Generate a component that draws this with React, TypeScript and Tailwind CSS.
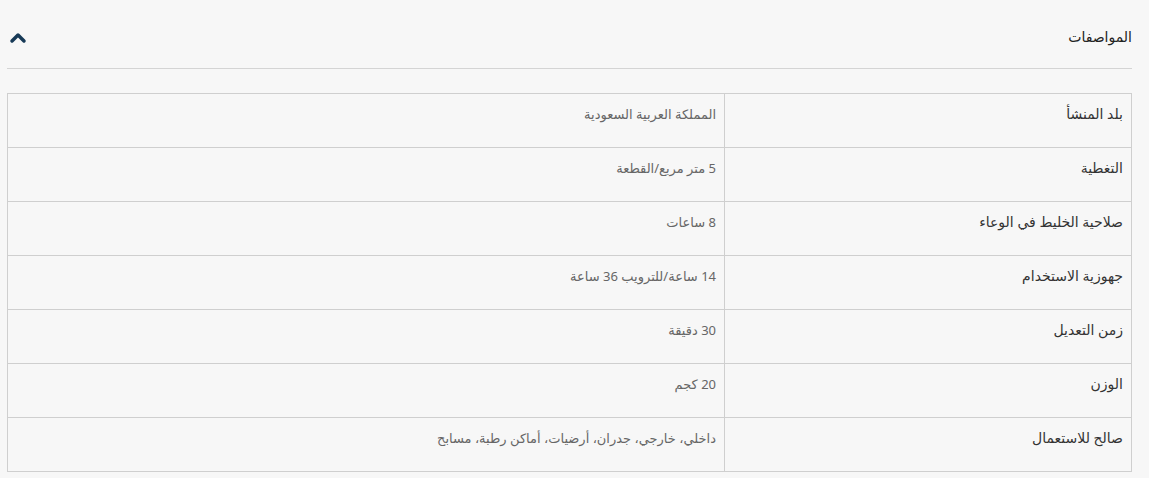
import { ChevronUp } from "lucide-react";

const specs: [string, string][] = [
  ["بلد المنشأ", "المملكة العربية السعودية"],
  ["التغطية", "5 متر مربع/القطعة"],
  ["صلاحية الخليط في الوعاء", "8 ساعات"],
  ["جهوزية الاستخدام", "14 ساعة/للترويب 36 ساعة"],
  ["زمن التعديل", "30 دقيقة"],
  ["الوزن", "20 كجم"],
  ["صالح للاستعمال", "داخلي، خارجي، جدران، أرضيات، أماكن رطبة، مسابح"],
];

export default function App() {
  return (
    <div
      dir="rtl"
      className="min-h-[478px] w-[1149px] bg-[#f7f7f7] pl-[7px] pr-[17px] pt-[26px] font-['Noto_Sans','DejaVu_Sans',sans-serif]"
    >
      <div className="flex h-[43px] items-start justify-between border-b border-[#d4d4d4]">
        <h3 className="text-[14px] leading-[22px] font-medium text-[#222]">المواصفات</h3>
        <ChevronUp className="-ml-[1px] h-[24px] w-[24px] text-[#173a57]" strokeWidth={3.5} />
      </div>
      <table className="mt-[24px] w-full border-collapse border border-[#cfcfcf]">
        <tbody>
          {specs.map(([label, value]) => (
            <tr key={label} className="h-[54px] border-b border-[#cfcfcf]">
              <td className="w-[407px] border-l border-[#cfcfcf] px-2 pt-[9px] align-top text-[14px] leading-[22px] text-[#333]">
                {label}
              </td>
              <td className="px-2 pt-[9px] align-top text-[13px] leading-[22px] text-[#666]">
                {value}
              </td>
            </tr>
          ))}
        </tbody>
      </table>
    </div>
  );
}
